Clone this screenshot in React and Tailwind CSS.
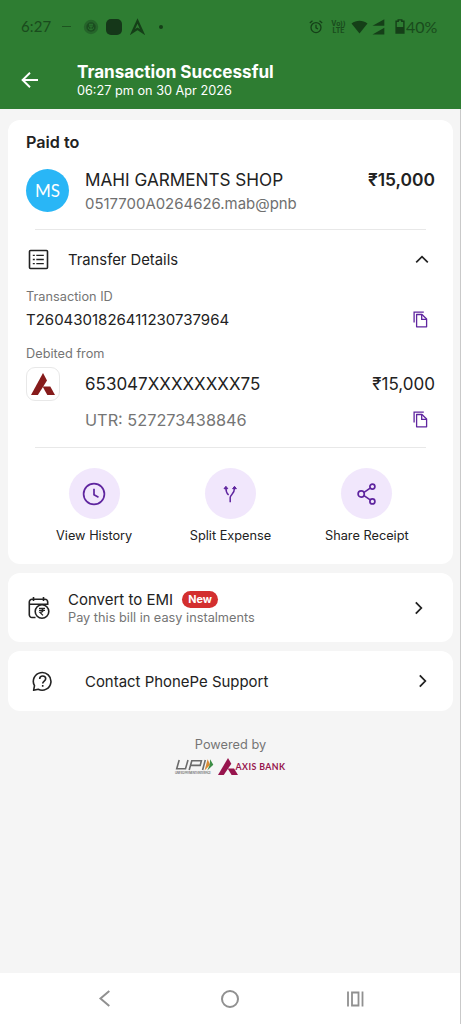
import React from "react";

const Divider = () => <div className="mx-[9px] h-px bg-[#e8e8e8]" />;

const CopyIcon = () => (
  <svg className="mb-[1px]" width="15" height="17" viewBox="0 0 15 17" fill="none" stroke="#5f259f" strokeWidth="1.3">
    <path d="M1.1 11.5V1.2h9.7" />
    <path d="M3.6 3.5h5.4L13.6 8v7.8h-10z" strokeLinejoin="round" />
    <path d="M8.7 3.7v4.6h5" />
  </svg>
);

const AxisMark = ({ width, height, color }) => (
  <svg width={width} height={height} viewBox="0 0 24 21" preserveAspectRatio="none" fill={color}>
    <path d="M12 0l4 7.2L6.9 21H0z" />
    <path d="M11.6 13h7.7L24 21h-7.7z" />
  </svg>
);

const Chevron = () => (
  <svg width="10" height="14" viewBox="0 0 10 14" fill="none" stroke="#222" strokeWidth="1.8">
    <path d="M1.8 1.3L7.3 7l-5.5 5.7" />
  </svg>
);

function StatusBar() {
  return (
    <div className="flex h-[53px] items-center pl-[21px] pr-[21px] text-[#153f18]">
      <span className="w-[31px] whitespace-nowrap font-['Lato',sans-serif] text-[15px] tracking-[0.1px] opacity-80">6:27</span>
      <span className="ml-[10px] h-px w-[9px] bg-[#1d5520]" />
      <svg className="ml-[12px]" width="16" height="16" viewBox="0 0 16 16" fill="none">
        <circle cx="8" cy="8" r="7.2" fill="#25642a" />
        <circle cx="8" cy="8" r="4.7" fill="#1b4d20" />
        <path d="M6 5.3h4M6 7h4M8 7v3.5M5.5 8.5c0 3 5 3 5 0" stroke="#2e7d32" strokeWidth=".9" />
      </svg>
      <span className="ml-[7px] h-[16px] w-[16px] rounded-[5px] bg-[#153719]" />
      <svg className="ml-[8px]" width="15" height="17" viewBox="0 0 15 17">
        <path d="M7.5 3L2.4 14.2l5.1-3.4 5.1 3.4z" fill="none" stroke="#153f18" strokeWidth="2.2" />
      </svg>
      <span className="ml-[14px] h-[4px] w-[4px] rounded-full bg-[#153f18]" />
      <div className="ml-auto flex items-center">
        <svg width="14" height="14" viewBox="0 0 14 14" fill="none" stroke="#153f18" strokeWidth="1.3">
          <circle cx="7" cy="7.6" r="5" />
          <path d="M7 4.8v3l2 1.2M.8 3L3.5.8M13.2 3L10.5.8" />
        </svg>
        <div className="ml-[8px] w-[15px] text-center font-['Inter',sans-serif] text-[7px] leading-[7px] font-bold opacity-80">
          <div>Vo))</div>
          <div>LTE</div>
        </div>
        <svg className="ml-[5px]" width="17" height="14" viewBox="0 0 17 14" fill="#153f18">
          <path d="M.5 3.4C5.2-.3 11.8-.3 16.5 3.4L8.5 13.5z" />
        </svg>
        <svg className="ml-[4px]" width="13" height="16" viewBox="0 0 13 16" fill="#153f18">
          <path d="M12.3.3v6.4H.5z" />
          <path d="M12.3 8.8v6.7H.5z" />
        </svg>
        <svg className="ml-[10px]" width="10" height="15" viewBox="0 0 10 15">
          <path d="M3.2.9h3.6v1.4h2.1v11.8H1.1V2.3h2.1z" fill="none" stroke="#153f18" strokeWidth="1.4" />
          <path d="M1 8h8v6H1z" fill="#153f18" />
        </svg>
        <span className="ml-[1px] w-[34px] whitespace-nowrap font-['Lato',sans-serif] text-[16px] leading-[18px] opacity-80">40%</span>
      </div>
    </div>
  );
}

function Header() {
  return (
    <header className="h-[109px] bg-[#2e7d32]">
      <StatusBar />
      <div className="flex h-[54px] items-center pl-[21px]">
        <svg width="18" height="18" viewBox="0 0 18 18" fill="none" stroke="#fff" strokeWidth="1.9">
          <path d="M17 9H1.8M9 1.8L1.6 9 9 16.2" />
        </svg>
        <div className="ml-[38px] text-white">
          <h1 className="text-[17.1px] leading-[20px] font-bold whitespace-nowrap">Transaction Successful</h1>
          <p className="text-[12.7px] leading-[17px] whitespace-nowrap">06:27 pm on 30 Apr 2026</p>
        </div>
      </div>
    </header>
  );
}

const actions = [
  {
    label: "View History",
    icon: (
      <svg width="24" height="24" viewBox="0 0 24 24" fill="none" stroke="#5f259f" strokeWidth="1.7">
        <circle cx="12" cy="12" r="10.4" />
        <path d="M12 6.8v6l4.5 2.4" />
      </svg>
    ),
  },
  {
    label: "Split Expense",
    icon: (
      <svg width="16" height="18" viewBox="0 0 16 18" fill="none" stroke="#5f259f" strokeWidth="1.5">
        <path d="M8.2 17.3v-4.8c0-3 4.3-2.8 4.3-9.5M3.9 3c0 3.6.7 5.4 2.7 7" />
        <path d="M3.9 1.3L2 3.7h3.8zM12.5 1.3l-1.9 2.4h3.8z" fill="#5f259f" strokeWidth="1" />
      </svg>
    ),
  },
  {
    label: "Share Receipt",
    icon: (
      <svg width="20" height="22" viewBox="0 0 20 22" fill="none" stroke="#5f259f" strokeWidth="1.7">
        <circle cx="4.2" cy="11" r="3.1" />
        <circle cx="15.4" cy="3.6" r="2.5" />
        <circle cx="15.4" cy="18.4" r="2.5" />
        <path d="M7 9.4l6.2-4.3M7 12.6l6.2 4.3" />
      </svg>
    ),
  },
];

function PaymentCard() {
  return (
    <section className="h-[444px] rounded-[12px] bg-white px-[18px]">
      <h2 className="text-[16.2px] leading-[44px] font-semibold">Paid to</h2>
      <div className="flex h-[65px] pt-[5px]">
        <div className="flex h-[43px] w-[43px] items-center justify-center rounded-full bg-[#29b6f6] font-['Lato',sans-serif] text-[17px] text-white">
          MS
        </div>
        <div className="ml-[16px] whitespace-nowrap">
          <div className="text-[17.15px] leading-[22px]">MAHI GARMENTS SHOP</div>
          <div className="text-[14.95px] leading-[27px] text-[#6f6f6f]">0517700A0264626.mab@pnb</div>
        </div>
        <div className="ml-auto text-[17.4px] leading-[22px] font-semibold">₹15,000</div>
      </div>
      <Divider />

      <div className="flex h-[58px] items-center">
        <svg className="ml-[2px]" width="21" height="21" viewBox="0 0 21 21" fill="none" stroke="#222" strokeWidth="1.6">
          <rect x="1.5" y="1.5" width="18" height="18" rx="1" />
          <path d="M8.3 6.4h7.5M8.3 10.5h7.5M8.3 14.6h7.5M4.8 6.4h2M4.8 10.5h2M4.8 14.6h2" strokeWidth="1.4" />
        </svg>
        <span className="ml-[19px] pt-[2px] text-[14.8px]">Transfer Details</span>
        <svg className="mr-[6px] ml-auto" width="14" height="9" viewBox="0 0 14 9" fill="none" stroke="#222" strokeWidth="1.7">
          <path d="M1.2 7.4L7 1.6l5.8 5.8" />
        </svg>
      </div>

      <div className="h-[16px] text-[12.75px] leading-[18px] text-[#757575]">Transaction ID</div>
      <div className="flex h-[32px] items-center justify-between pr-[7px]">
        <span className="text-[15px]">T2604301826411230737964</span>
        <CopyIcon />
      </div>

      <div className="mt-[9px] h-[16px] text-[12.75px] leading-[18px] text-[#757575]">Debited from</div>
      <div className="flex h-[46px] items-center">
        <div className="flex h-[34px] w-[34px] items-center justify-center rounded-[9px] border border-[#e8e8e8]">
          <AxisMark width="24" height="22" color="#861b1b" />
        </div>
        <span className="ml-[25px] pt-[2px] text-[17px]">653047XXXXXXXX75</span>
        <span className="ml-auto pt-[2px] text-[17px]">₹15,000</span>
      </div>
      <div className="mb-[14px] flex h-[26px] items-center justify-between pr-[7px] pl-[59px]">
        <span className="text-[16.3px] text-[#757575]">UTR: 527273438846</span>
        <CopyIcon />
      </div>
      <Divider />

      <div className="grid grid-cols-3 pt-[20px]">
        {actions.map((a) => (
          <button key={a.label} type="button" className="flex flex-col items-center">
            <span className="flex h-[51px] w-[51px] items-center justify-center rounded-full bg-[#f1e7fc]">{a.icon}</span>
            <span className="mt-[9px] text-[12.75px] leading-[16px] whitespace-nowrap">{a.label}</span>
          </button>
        ))}
      </div>
    </section>
  );
}

function EmiCard() {
  return (
    <section className="mt-[9px] flex h-[69px] items-center rounded-[12px] bg-white pr-[29px] pl-[20px]">
      <svg width="22" height="24" viewBox="0 0 22 24" fill="none" stroke="#222" strokeWidth="1.6">
        <path d="M7.5 21.5H4a2.7 2.7 0 01-2.7-2.7V6A2.7 2.7 0 014 3.3h13A2.7 2.7 0 0119.7 6v3M1.3 8.3h18.4M5.5 1v4M15.5 1v4" />
        <circle cx="14" cy="15.5" r="6.8" />
        <path d="M11 12.3h6M11 14.4h6M12 12.3c4 0 4 4.1 0 4.1l3 3" strokeWidth="1.3" />
      </svg>
      <div className="ml-[18px] pt-[2px] whitespace-nowrap">
        <div className="flex items-center">
          <span className="text-[15px] leading-[19px]">Convert to EMI</span>
          <span className="ml-[9px] h-[17px] w-[36px] rounded-full bg-[#d32f2f] text-center text-[10.8px] leading-[17px] font-bold text-white">New</span>
        </div>
        <div className="text-[12.75px] leading-[18px] text-[#757575]">Pay this bill in easy instalments</div>
      </div>
      <div className="ml-auto">
        <Chevron />
      </div>
    </section>
  );
}

function SupportCard() {
  return (
    <section className="mt-[9px] flex h-[60px] items-center rounded-[12px] bg-white pr-[25px] pl-[24px]">
      <svg width="21" height="21" viewBox="0 0 21 21" fill="none" stroke="#222" strokeWidth="1.6">
        <path d="M1.6 19.3l.9-4.6A8.8 8.8 0 116.2 18.2z" strokeLinejoin="round" />
        <path d="M7.7 8c0-4 6-3.8 6-.2 0 2.3-3 2.3-3 4.7M10.7 14v1.8" />
      </svg>
      <span className="ml-[32px] pt-[2px] text-[14.95px]">Contact PhonePe Support</span>
      <div className="ml-auto">
        <Chevron />
      </div>
    </section>
  );
}

function PoweredBy() {
  return (
    <div className="mt-[26px] flex flex-col items-center">
      <span className="text-[12.75px] leading-[16px] text-[#757575]">Powered by</span>
      <div className="mt-[4px] -ml-[2px] flex h-[19px] items-center">
        <svg width="40" height="17" viewBox="0 0 40 17">
          <g fill="none" stroke="#6b6b6b" strokeWidth="1.6">
            <path d="M5.2 2L2.7 10.8h8.8L14 2M15.2 12l2.6-9.2h9.6l-1.2 4.6h-9.4" />
            <path d="M31.3 2l-2.7 10" />
          </g>
          <path d="M33.6 1.2l2.6 5.6-5.6 5.6z" fill="#d88b36" />
          <path d="M36.1 1.2l3.2 5.6-6 5.6 2.5-5.6z" fill="#3c8d45" />
          <text x="1" y="16" fontFamily="Inter, sans-serif" fontSize="2.9" fontWeight="600" fill="#777" textLength="36">
            UNIFIED PAYMENTS INTERFACE
          </text>
        </svg>
        <div className="ml-[4px]">
          <AxisMark width="20" height="17" color="#97144d" />
        </div>
        <span className="-ml-[2px] font-['Lato',sans-serif] text-[8.8px] leading-[12px] font-bold tracking-[0.4px] whitespace-nowrap text-[#97144d]">
          AXIS BANK
        </span>
      </div>
    </div>
  );
}

function NavBar() {
  return (
    <nav className="mt-auto flex h-[51px] items-center bg-white">
      <svg className="ml-[98px]" width="13" height="17" viewBox="0 0 13 17" fill="none" stroke="#909090" strokeWidth="2">
        <path d="M11.3 1L2.5 8.5l8.8 7.5" />
      </svg>
      <span className="ml-[110px] h-[18px] w-[18px] rounded-full border-2 border-[#909090]" />
      <svg className="ml-[107px]" width="18" height="16" viewBox="0 0 18 16" fill="none" stroke="#909090" strokeWidth="1.8">
        <path d="M2 .5v15M16.5.5v15M6 1.5h6.5v13H6z" />
      </svg>
    </nav>
  );
}

export default function App() {
  return (
    <div className="flex h-[1024px] w-[461px] flex-col overflow-hidden bg-[#f5f5f5] font-['Inter',sans-serif] text-[#222]">
      <Header />
      <div className="flex flex-1 flex-col border-r border-[#c9c9c9]">
        <main className="pt-[11px] pr-[7px] pl-[8px]">
          <PaymentCard />
          <EmiCard />
          <SupportCard />
          <PoweredBy />
        </main>
        <NavBar />
      </div>
    </div>
  );
}
